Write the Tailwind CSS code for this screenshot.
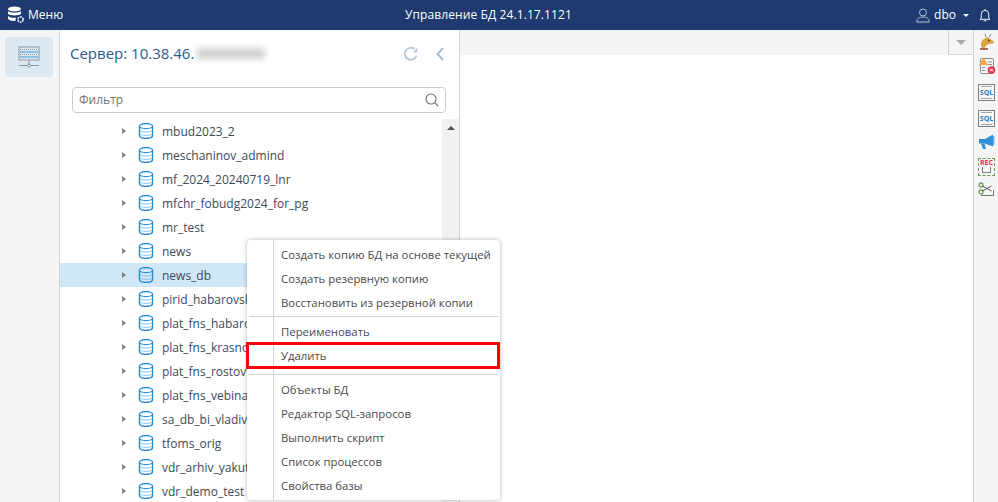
<!DOCTYPE html>
<html lang="ru">
<head>
  <meta charset="UTF-8" />
  <script src="https://cdn.jsdelivr.net/npm/@tailwindcss/browser@4"></script>
  <title>Управление БД</title>
</head>
<body>
  <!-- database icon, reused by every tree row -->
  <svg class="hidden">
    <symbol id="db" viewBox="0 0 16 16" fill="none">
      <path d="M1.500 3.200c0-3.400 13-3.400 13 0v9.600c0 3.400-13 3.400-13 0z" stroke="#2088d4" stroke-width="1.400"/>
      <path d="M1.500 3.500c0 2.800 13 2.800 13 0" stroke="#2088d4" stroke-width="1"/>
      <path d="M2 7.800c2 1.600 10 1.600 12 0M2 11.200c2 1.600 10 1.600 12 0" stroke="#8fc2e8" stroke-width="1"/>
    </symbol>
  </svg>

  <div class="relative w-[998px] h-[502px] overflow-hidden flex flex-col bg-white font-['Open_Sans',sans-serif]">

    <!-- header -->
    <header class="h-[30px] shrink-0 bg-[#1e3a70] text-white flex items-center justify-between pl-[7px] pr-[7px] relative">
      <div class="flex items-center gap-[3px]">
        <svg width="18" height="18" viewBox="0 0 18 18" fill="none">
          <ellipse cx="7.500" cy="3" rx="6.500" ry="2.400" fill="#fff"/>
          <path d="M1 5c1 2.300 12 2.300 13 0v2.800c-1 2.300-12 2.300-13 0z" fill="#fff"/>
          <path d="M1 9.800c1 1.800 5.500 2.400 8 1.900l-.7 3.200c-3 .2-6.300-.4-7.300-2.200z" fill="#fff"/>
          <circle cx="13.500" cy="13.500" r="2.600" stroke="#dfe6f0" stroke-width="1.700" stroke-dasharray="2 .8"/>
        </svg>
        <span class="text-[12px]">Меню</span>
      </div>
      <div class="absolute left-[405px] text-[12px] leading-[30px] tracking-[0.1px]">Управление БД 24.1.17.1121</div>
      <div class="flex items-center">
        <svg width="14" height="15" viewBox="0 0 14 15" fill="none" stroke="#b9c2d2" stroke-width="1">
          <circle cx="7" cy="4.500" r="3.500"/>
          <path d="M.8 14c0-3.500 2.500-5 6.200-5s6.200 1.500 6.200 5z"/>
        </svg>
        <span class="text-[12px] ml-[4px]">dbo</span>
        <span class="ml-[7px] w-0 h-0 border-x-[3px] border-x-transparent border-t-[3px] border-t-white"></span>
        <svg class="ml-[10px]" width="12" height="14" viewBox="0 0 13 15" fill="none" stroke="#fff" stroke-width="1">
          <path d="M6.500 1v1M2.500 11V6.500a4 4 0 0 1 8 0V11l1.500 1.200H1z"/>
          <path d="M5 13.800h3"/>
        </svg>
      </div>
    </header>

    <div class="flex flex-1 min-h-0">
      <!-- left rail -->
      <aside class="w-[59px] shrink-0 bg-[#f5f5f5] pl-[5px] pt-[7px]">
        <div class="w-[48px] h-[40px] rounded-[4px] bg-[#dce8f2] flex items-center justify-center">
          <svg width="22" height="22" viewBox="0 0 22 22" fill="none">
            <rect x="1" y="1" width="20" height="13" fill="none" stroke="#8d96a0" stroke-width="1"/>
            <path d="M2 3.500h18" stroke="#8d96a0" stroke-width="1" stroke-dasharray="1 1"/>
            <path d="M2 6h18" stroke="#3b9bdc" stroke-width="1"/>
            <path d="M2 8.500h18" stroke="#8d96a0" stroke-width="1" stroke-dasharray="1 1"/>
            <path d="M2 11h18" stroke="#3b9bdc" stroke-width="1"/>
            <path d="M11 14v5M1 19.500h8M13 19.500h8" stroke="#8d96a0" stroke-width="1"/>
            <circle cx="11" cy="19.500" r="1.500" stroke="#8d96a0" stroke-width="1"/>
          </svg>
        </div>
      </aside>

      <!-- server panel -->
      <section class="w-[401px] shrink-0 flex flex-col border-x border-[#d2d2d2] rounded-tl-[4px] bg-white">
        <div class="h-[57px] shrink-0 flex items-center pl-[10px] pr-[15px] pb-[11px] pt-[1px]">
          <span class="text-[15px] text-[#2c5a8c]">Сервер: 10.38.46.</span>
          <span class="ml-[3px] w-[68px] h-[11px] bg-[#d0d0d0] blur-[3px]"></span>
          <svg class="ml-auto" width="16" height="16" viewBox="0 0 16 16" fill="none" stroke="#bccbdb" stroke-width="2">
            <path d="M13.600 9.500A6 6 0 1 1 11.500 3"/>
            <path d="M14.500 1.500v5h-5" fill="#bccbdb" stroke="none"/>
          </svg>
          <svg class="ml-[17px]" width="8" height="14" viewBox="0 0 8 14" fill="none" stroke="#a9bdd2" stroke-width="2">
            <path d="M7 1L1.500 7 7 13"/>
          </svg>
        </div>
        <div class="ml-[12px] mr-[13px] h-[26px] shrink-0 flex items-center justify-between rounded-[4px] border border-[#cccccc] pl-[6px] pr-[6px]">
          <span class="text-[12px] text-[#757575]">Фильтр</span>
          <svg width="14" height="14" viewBox="0 0 14 14" fill="none" stroke="#6e6e6e" stroke-width="1.100">
            <circle cx="6" cy="6" r="5"/>
            <path d="M9.700 9.700L13 13"/>
          </svg>
        </div>
        <div class="flex-1 min-h-0 flex mt-[6px]">
          <ul class="flex-1 min-w-0 overflow-hidden text-[12px] text-[#3b4a5a]">
            <li class="h-[24px] flex items-center pl-[62px]"><span class="w-0 h-0 border-y-[3.500px] border-y-transparent border-l-[4px] border-l-[#808080]"></span><svg class="ml-[12px]" width="16" height="16"><use href="#db"/></svg><span class="ml-[8px] pt-[2px]">mbud2023_2</span></li>
            <li class="h-[24px] flex items-center pl-[62px]"><span class="w-0 h-0 border-y-[3.500px] border-y-transparent border-l-[4px] border-l-[#808080]"></span><svg class="ml-[12px]" width="16" height="16"><use href="#db"/></svg><span class="ml-[8px] pt-[2px]">meschaninov_admind</span></li>
            <li class="h-[24px] flex items-center pl-[62px]"><span class="w-0 h-0 border-y-[3.500px] border-y-transparent border-l-[4px] border-l-[#808080]"></span><svg class="ml-[12px]" width="16" height="16"><use href="#db"/></svg><span class="ml-[8px] pt-[2px]">mf_2024_20240719_lnr</span></li>
            <li class="h-[24px] flex items-center pl-[62px]"><span class="w-0 h-0 border-y-[3.500px] border-y-transparent border-l-[4px] border-l-[#808080]"></span><svg class="ml-[12px]" width="16" height="16"><use href="#db"/></svg><span class="ml-[8px] pt-[2px]">mfchr_fobudg2024_for_pg</span></li>
            <li class="h-[24px] flex items-center pl-[62px]"><span class="w-0 h-0 border-y-[3.500px] border-y-transparent border-l-[4px] border-l-[#808080]"></span><svg class="ml-[12px]" width="16" height="16"><use href="#db"/></svg><span class="ml-[8px] pt-[2px]">mr_test</span></li>
            <li class="h-[24px] flex items-center pl-[62px]"><span class="w-0 h-0 border-y-[3.500px] border-y-transparent border-l-[4px] border-l-[#808080]"></span><svg class="ml-[12px]" width="16" height="16"><use href="#db"/></svg><span class="ml-[8px] pt-[2px]">news</span></li>
            <li class="h-[24px] flex items-center pl-[62px] bg-[#d0e7f8]"><span class="w-0 h-0 border-y-[3.500px] border-y-transparent border-l-[4px] border-l-[#808080]"></span><svg class="ml-[12px]" width="16" height="16"><use href="#db"/></svg><span class="ml-[8px] pt-[2px]">news_db</span></li>
            <li class="h-[24px] flex items-center pl-[62px]"><span class="w-0 h-0 border-y-[3.500px] border-y-transparent border-l-[4px] border-l-[#808080]"></span><svg class="ml-[12px]" width="16" height="16"><use href="#db"/></svg><span class="ml-[8px] pt-[2px]">pirid_habarovsk</span></li>
            <li class="h-[24px] flex items-center pl-[62px]"><span class="w-0 h-0 border-y-[3.500px] border-y-transparent border-l-[4px] border-l-[#808080]"></span><svg class="ml-[12px]" width="16" height="16"><use href="#db"/></svg><span class="ml-[8px] pt-[2px]">plat_fns_habarovsk</span></li>
            <li class="h-[24px] flex items-center pl-[62px]"><span class="w-0 h-0 border-y-[3.500px] border-y-transparent border-l-[4px] border-l-[#808080]"></span><svg class="ml-[12px]" width="16" height="16"><use href="#db"/></svg><span class="ml-[8px] pt-[2px]">plat_fns_krasnodar</span></li>
            <li class="h-[24px] flex items-center pl-[62px]"><span class="w-0 h-0 border-y-[3.500px] border-y-transparent border-l-[4px] border-l-[#808080]"></span><svg class="ml-[12px]" width="16" height="16"><use href="#db"/></svg><span class="ml-[8px] pt-[2px]">plat_fns_rostov</span></li>
            <li class="h-[24px] flex items-center pl-[62px]"><span class="w-0 h-0 border-y-[3.500px] border-y-transparent border-l-[4px] border-l-[#808080]"></span><svg class="ml-[12px]" width="16" height="16"><use href="#db"/></svg><span class="ml-[8px] pt-[2px]">plat_fns_vebinar</span></li>
            <li class="h-[24px] flex items-center pl-[62px]"><span class="w-0 h-0 border-y-[3.500px] border-y-transparent border-l-[4px] border-l-[#808080]"></span><svg class="ml-[12px]" width="16" height="16"><use href="#db"/></svg><span class="ml-[8px] pt-[2px]">sa_db_bi_vladivostok</span></li>
            <li class="h-[24px] flex items-center pl-[62px]"><span class="w-0 h-0 border-y-[3.500px] border-y-transparent border-l-[4px] border-l-[#808080]"></span><svg class="ml-[12px]" width="16" height="16"><use href="#db"/></svg><span class="ml-[8px] pt-[2px]">tfoms_orig</span></li>
            <li class="h-[24px] flex items-center pl-[62px]"><span class="w-0 h-0 border-y-[3.500px] border-y-transparent border-l-[4px] border-l-[#808080]"></span><svg class="ml-[12px]" width="16" height="16"><use href="#db"/></svg><span class="ml-[8px] pt-[2px]">vdr_arhiv_yakutsk</span></li>
            <li class="h-[24px] flex items-center pl-[62px]"><span class="w-0 h-0 border-y-[3.500px] border-y-transparent border-l-[4px] border-l-[#808080]"></span><svg class="ml-[12px]" width="16" height="16"><use href="#db"/></svg><span class="ml-[8px] pt-[2px]">vdr_demo_test</span></li>
          </ul>
          <!-- scrollbar -->
          <div class="w-[17px] shrink-0 bg-[#f1f1f1] flex justify-center pt-[7px]">
            <span class="w-0 h-0 border-x-[4px] border-x-transparent border-b-[4px] border-b-[#505050]"></span>
          </div>
        </div>
      </section>

      <!-- work area -->
      <main class="flex-1 min-w-0 flex flex-col">
        <div class="h-[25px] shrink-0 bg-[#f5f5f5] flex justify-end">
          <div class="w-[25px] h-[25px] border-l border-b border-[#d2d2d2] flex items-center justify-center">
            <span class="w-0 h-0 border-x-[5px] border-x-transparent border-t-[5px] border-t-[#a8a8a8]"></span>
          </div>
        </div>
      </main>

      <!-- right tool rail -->
      <aside class="w-[25px] shrink-0 bg-[#f5f5f5] border-l border-[#d2d2d2] flex flex-col items-center pt-[3px] pl-[1px]">
        <svg width="18" height="18" viewBox="0 0 18 18">
          <path d="M4 15c-2-3-1-7 2-9l3-2 7 4.500-1 2-4 .5-3 1.500-1 2.500z" fill="#d9a441"/>
          <path d="M2 16h8" stroke="#8a3b1e" stroke-width="1.500"/>
          <path d="M8 4L7 1M11 4l2-3" stroke="#888" stroke-width="1"/>
          <circle cx="11" cy="7.500" r="1" fill="#5a3a10"/>
        </svg>
        <svg class="mt-[6px]" width="18" height="18" viewBox="0 0 18 18" fill="none">
          <rect x="2.500" y="1.500" width="13" height="15" rx="1" stroke="#8a8a8a"/>
          <path d="M5.500 0.500L1 8h9z" fill="#f7a84a"/>
          <path d="M10 5h4M10 7.500h4M4 10.500h3M4 13.500h3" stroke="#8a8a8a"/>
          <circle cx="13.500" cy="13" r="3.800" fill="#e8344e"/>
          <path d="M12 11.500l3 3M15 11.500l-3 3" stroke="#fff"/>
        </svg>
        <div class="mt-[9px] w-[17px] h-[17px] border-[1.500px] border-[#808080] bg-[#f7f7f7] flex flex-col items-center justify-between py-[1px]">
          <span class="block w-[11px] h-px bg-[#a8a8a8]"></span>
          <span class="text-[7px] font-bold leading-[6px] text-[#1d7fc9]">SQL</span>
          <span class="block w-[11px] h-px bg-[#a8a8a8]"></span>
        </div>
        <div class="mt-[9px] w-[17px] h-[17px] border-[1.500px] border-[#808080] bg-[#f7f7f7] flex flex-col items-center justify-between py-[1px]">
          <span class="block w-[11px] h-px bg-[#a8a8a8]"></span>
          <span class="text-[7px] font-bold leading-[6px] text-[#1d7fc9]">SQL</span>
          <span class="block w-[11px] h-px bg-[#a8a8a8]"></span>
        </div>
        <svg class="mt-[6px]" width="17" height="17" viewBox="0 0 17 17">
          <path d="M1 6h6l8-4.500v12L7 10.500H1z" fill="#2e8fd6"/>
          <path d="M3 10.500h3.500l1.500 5.500H5z" fill="#2e8fd6"/>
          <rect x="15" y="3" width="1.500" height="9" fill="#7ab8e6"/>
        </svg>
        <div class="mt-[8px] w-[17px] h-[18px] border-[1.500px] border-dashed border-[#6f9a5a] flex flex-col items-center text-[7px] font-bold leading-[8px] text-[#e8344e]">
          <span>REC</span>
          <span class="w-[9px] h-[6px] border-x border-b border-[#808080]"></span>
        </div>
        <svg class="mt-[6px]" width="17" height="16" viewBox="0 0 17 16" fill="none" stroke="#6f9a5a" stroke-width="1.300">
          <circle cx="3" cy="3" r="2"/>
          <circle cx="3" cy="10" r="2"/>
          <path d="M4.500 4l9 5M4.500 9l9-5" stroke="#555" stroke-width="1"/>
          <path d="M3 13.500h12.500V8" stroke="#777" stroke-width="1"/>
        </svg>
      </aside>
    </div>

    <!-- context menu -->
    <div class="absolute left-[247px] top-[240px] w-[253px] h-[260px] bg-white rounded-[4px] shadow-[0_0_4px_rgba(0,0,0,0.3)] text-[11.350px] text-[#4a4a4a] py-[3px]">
      <div class="absolute left-[26px] top-0 bottom-0 w-px bg-[#d2d2d2]"></div>
      <div class="h-[24px] leading-[24px] pl-[34px]">Создать копию БД на основе текущей</div>
      <div class="h-[24px] leading-[24px] pl-[34px]">Создать резервную копию</div>
      <div class="h-[24px] leading-[24px] pl-[34px]">Восстановить из резервной копии</div>
      <div class="relative h-px bg-[#d2d2d2] mx-[2px] mt-[1px] mb-[3px]"></div>
      <div class="h-[24px] leading-[24px] pl-[34px]">Переименовать</div>
      <div class="h-[24px] leading-[24px] pl-[34px]">Удалить</div>
      <div class="relative h-px bg-[#d2d2d2] mx-[2px] mt-[6px] mb-[3px]"></div>
      <div class="h-[24px] leading-[24px] pl-[34px]">Объекты БД</div>
      <div class="h-[24px] leading-[24px] pl-[34px]">Редактор SQL-запросов</div>
      <div class="h-[24px] leading-[24px] pl-[34px]">Выполнить скрипт</div>
      <div class="h-[24px] leading-[24px] pl-[34px]">Список процессов</div>
      <div class="h-[24px] leading-[24px] pl-[34px]">Свойства базы</div>
    </div>

    <!-- red highlight -->
    <div class="absolute left-[246px] top-[342px] w-[254px] h-[27px] border-[3px] border-[#ff0000]"></div>
  </div>
</body>
</html>
